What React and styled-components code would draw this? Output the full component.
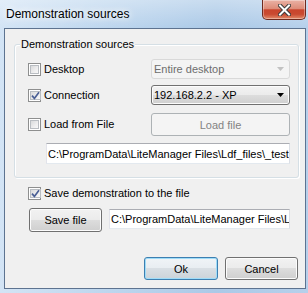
import styled, { createGlobalStyle } from "styled-components"

const GlobalStyle = createGlobalStyle`
  *, *::before, *::after { box-sizing: border-box; }
  html, body { margin: 0; padding: 0; }
  body {
    width: 308px;
    height: 293px;
    overflow: hidden;
    font-family: "Liberation Sans", Arial, sans-serif;
    font-size: 11px;
    color: #000;
  }
`

const Window = styled.div`
  width: 308px;
  height: 293px;
  display: flex;
  flex-direction: column;
  padding: 0 2px 4px 4px;
  background: linear-gradient(90deg, #d3e4f5 0%, #c0d8ef 30%, #abc9e7 70%, #b6d0eb 100%);
`

const TitleBar = styled.div`
  height: 28px;
  flex-shrink: 0;
  display: flex;
  justify-content: space-between;
  align-items: flex-start;
  background: linear-gradient(180deg, rgba(255, 255, 255, 0.35) 0%, rgba(255, 255, 255, 0) 100%);
  margin: 0 -2px 0 -4px;
  padding: 0 2px 0 4px;
`

const Title = styled.div`
  padding: 7px 0 0 2px;
  font-size: 12px;
  line-height: 14px;
  text-shadow: 0 0 6px #fff, 0 0 10px #fff;
`

const CloseButton = styled.div`
  width: 44px;
  height: 20px;
  display: flex;
  align-items: center;
  justify-content: center;
  border: 1px solid #6e2a1f;
  border-top: none;
  border-radius: 0 0 5px 5px;
  background: linear-gradient(180deg, #eab2a5 0%, #dd8c79 45%, #c9452d 52%, #c94a31 75%, #e28b6a 100%);
  box-shadow: inset 0 0 0 1px rgba(255, 255, 255, 0.35);
`

const Client = styled.div`
  flex: 1;
  display: flex;
  flex-direction: column;
  border: 1px solid #5d7390;
  background: #f0f0f0;
  padding: 15px 6px 8px 9px;
`

const Group = styled.div`
  position: relative;
  border: 1px solid #d5dfe5;
  border-radius: 3px;
  box-shadow: inset 1px 1px 0 #fff, 1px 1px 0 #fff;
  padding: 14px 8px 13px 13px;
`

const Caption = styled.div`
  position: absolute;
  top: -7px;
  left: 5px;
  padding: 0 1px;
  background: #f0f0f0;
  line-height: 13px;
`

const SourceRow = styled.div`
  display: grid;
  grid-template-columns: 1fr 139px;
  align-items: center;
  height: ${p => p.$h}px;
  margin-top: ${p => p.$mt || 0}px;
`

const PathRow = styled.div`
  display: flex;
  height: 21px;
  margin-top: 7px;
  padding-left: 18px;
`

const CheckLabel = styled.label`
  display: flex;
  align-items: center;
  gap: 3px;
  line-height: 13px;
  padding-left: ${p => p.$indent || 0}px;
  margin-top: ${p => p.$mt || 0}px;
`

const Box = styled.span`
  width: 13px;
  height: 13px;
  flex-shrink: 0;
  display: flex;
  padding: 1px;
  border: 1px solid #8e8f8f;
  background: #fff;
`

const BoxInner = styled.span`
  flex: 1;
  display: flex;
  align-items: center;
  justify-content: center;
  border: 1px solid #b9bdc2;
  background: linear-gradient(135deg, #d9dadb 0%, #eeeeef 60%, #f8f8f8 100%);
`

const Combo = styled.div`
  height: 20px;
  display: flex;
  align-items: center;
  justify-content: space-between;
  padding: 0 5px 0 2px;
  border: 1px solid ${p => (p.$disabled ? "#d9d9d9" : "#707070")};
  border-radius: 3px;
  color: ${p => (p.$disabled ? "#6d6d6d" : "#000")};
  background: ${p =>
    p.$disabled
      ? "#f4f4f4"
      : "linear-gradient(180deg, #f2f2f2 0%, #ebebeb 50%, #dddddd 50%, #cfcfcf 100%)"};
  box-shadow: ${p => (p.$disabled ? "none" : "inset 0 0 0 1px #fcfcfc")};
  white-space: nowrap;
`

const Button = styled.div`
  width: ${p => (p.$w ? `${p.$w}px` : "auto")};
  height: ${p => p.$h || 23}px;
  flex-shrink: 0;
  display: flex;
  align-items: center;
  justify-content: center;
  border: 1px solid ${p => (p.$disabled ? "#adb2b5" : p.$primary ? "#3c7fb1" : "#707070")};
  border-radius: 3px;
  color: ${p => (p.$disabled ? "#838383" : "#000")};
  background: ${p =>
    p.$disabled
      ? "#f4f4f4"
      : p.$primary
      ? "linear-gradient(180deg, #f0f4f7 0%, #e8edf1 50%, #d9dfe4 50%, #ccd3d9 100%)"
      : "linear-gradient(180deg, #f2f2f2 0%, #ebebeb 50%, #dddddd 50%, #cfcfcf 100%)"};
  box-shadow: ${p =>
    p.$disabled ? "none" : p.$primary ? "inset 0 0 0 1px #9fdcf8" : "inset 0 0 0 1px #fcfcfc"};
`

const Field = styled.div`
  height: ${p => p.$h || 20}px;
  flex: 1;
  min-width: 0;
  display: flex;
  align-items: center;
  margin: ${p => p.$margin || "0"};
  padding: 0 1px;
  border: 1px solid;
  border-color: #abadb3 #dbdfe6 #e3e9ef #e2e3ea;
  background: #fff;
  white-space: nowrap;
  overflow: hidden;
`

const SaveRow = styled.div`
  display: flex;
  align-items: flex-start;
  gap: 7px;
  margin-top: 8px;
  padding: 0 9px 0 15px;
`

const Footer = styled.div`
  margin-top: auto;
  display: flex;
  justify-content: flex-end;
  gap: 7px;
  padding-right: 1px;
`

function Checkbox({ checked }) {
  return (
    <Box>
      <BoxInner>
        {checked && (
          <svg width="9" height="9" viewBox="0 0 9 9">
            <path d="M1 4.6 L3.4 7.4 L8 1.2" fill="none" stroke="#4a5f95" strokeWidth="1.7" />
          </svg>
        )}
      </BoxInner>
    </Box>
  )
}

function Arrow({ color }) {
  return (
    <svg width="7" height="4" viewBox="0 0 7 4">
      <polygon points="0,0 7,0 3.5,4" fill={color} />
    </svg>
  )
}

function App() {
  return (
    <>
      <GlobalStyle />
      <Window>
        <TitleBar>
          <Title>Demonstration sources</Title>
          <CloseButton>
            <svg width="13" height="12" viewBox="0 0 13 12">
              <path d="M2 1.5 L11 10.5 M11 1.5 L2 10.5" stroke="#3a3a3a" strokeWidth="4" strokeLinecap="square" />
              <path d="M2 1.5 L11 10.5 M11 1.5 L2 10.5" stroke="#fff" strokeWidth="2" strokeLinecap="square" />
            </svg>
          </CloseButton>
        </TitleBar>

        <Client>
          <Group>
            <Caption>Demonstration sources</Caption>
            <SourceRow $h={20}>
              <CheckLabel>
                <Checkbox />
                Desktop
              </CheckLabel>
              <Combo $disabled>
                Entire desktop
                <Arrow color="#c2c2c2" />
              </Combo>
            </SourceRow>
            <SourceRow $h={20} $mt={6}>
              <CheckLabel>
                <Checkbox checked />
                Connection
              </CheckLabel>
              <Combo>
                192.168.2.2 - XP
                <Arrow color="#000" />
              </Combo>
            </SourceRow>
            <SourceRow $h={23} $mt={8}>
              <CheckLabel>
                <Checkbox />
                Load from File
              </CheckLabel>
              <Button $disabled $h={23}>Load file</Button>
            </SourceRow>
            <PathRow>
              <Field $h={21}>C:\ProgramData\LiteManager Files\Ldf_files\_test</Field>
            </PathRow>
          </Group>

          <CheckLabel $indent={14} $mt={9}>
            <Checkbox checked />
            Save demonstration to the file
          </CheckLabel>

          <SaveRow>
            <Button $w={73} $h={24}>Save file</Button>
            <Field $h={20} $margin="1px 0 0 0">C:\ProgramData\LiteManager Files\Ldf_files\_test</Field>
          </SaveRow>

          <Footer>
            <Button $w={74} $primary>Ok</Button>
            <Button $w={73}>Cancel</Button>
          </Footer>
        </Client>
      </Window>
    </>
  )
}

export default App
